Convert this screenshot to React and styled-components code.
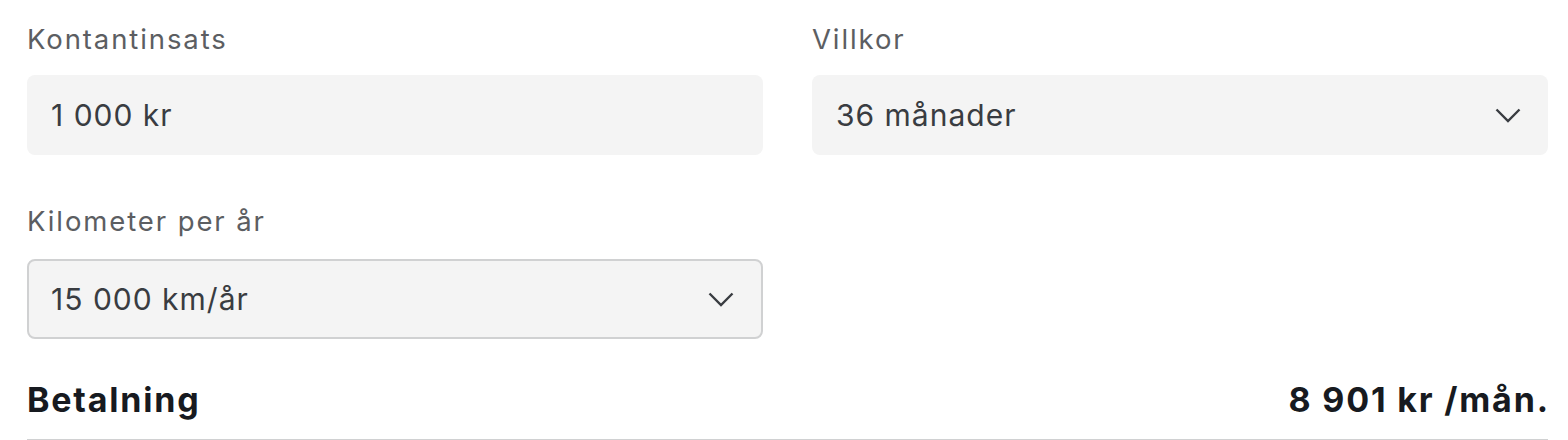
import React from 'react';
import styled, { createGlobalStyle } from 'styled-components';

const GlobalStyle = createGlobalStyle`
  body {
    margin: 0;
    background: #fff;
    font-family: Inter, "Open Sans", sans-serif;
  }
`;

const Page = styled.div`
  padding: 19px 20px 0 27px;
`;

const Grid = styled.div`
  display: grid;
  grid-template-columns: 1fr 1fr;
  column-gap: 49px;
  row-gap: 46px;
`;

const Field = styled.div`
  display: flex;
  flex-direction: column;
`;

const Label = styled.div`
  height: 40px;
  line-height: 40px;
  font-size: 27.5px;
  letter-spacing: 1.9px;
  color: #5c5e62;
  margin-bottom: ${p => (p.$tight ? '16px' : '18px')};
`;

const Box = styled.div`
  box-sizing: border-box;
  height: 80px;
  display: flex;
  align-items: center;
  justify-content: space-between;
  padding: 0 27px 0 24px;
  background: #f4f4f4;
  border-radius: 8px;
  border: ${p => (p.$outlined ? '2px solid #d0d1d2' : 'none')};
  padding-left: ${p => (p.$outlined ? '22px' : '24px')};
  font-size: 30px;
  letter-spacing: 1px;
  color: #393c41;
`;

const Summary = styled.div`
  display: flex;
  justify-content: space-between;
  align-items: center;
  margin-top: 40px;
  padding-bottom: 19px;
  border-bottom: 2px solid #d0d1d2;
  font-size: 34px;
  font-weight: 700;
  letter-spacing: 1.8px;
  color: #171a20;
`;

const Amount = styled.span`
  margin-right: -1.8px;
`;

const Chevron = () => (
  <svg width="26" height="15" viewBox="0 0 26 15" fill="none">
    <path d="M1.5 1.5 L13 13 L24.5 1.5" stroke="#393c41" strokeWidth="2.4" />
  </svg>
);

export default function App() {
  return (
    <>
      <GlobalStyle />
      <Page>
        <Grid>
          <Field>
            <Label $tight>Kontantinsats</Label>
            <Box>1 000 kr</Box>
          </Field>
          <Field>
            <Label $tight>Villkor</Label>
            <Box>
              36 månader
              <Chevron />
            </Box>
          </Field>
          <Field>
            <Label>Kilometer per år</Label>
            <Box $outlined>
              15 000 km/år
              <Chevron />
            </Box>
          </Field>
        </Grid>
        <Summary>
          <span>Betalning</span>
          <Amount>8 901 kr /mån.</Amount>
        </Summary>
      </Page>
    </>
  );
}
